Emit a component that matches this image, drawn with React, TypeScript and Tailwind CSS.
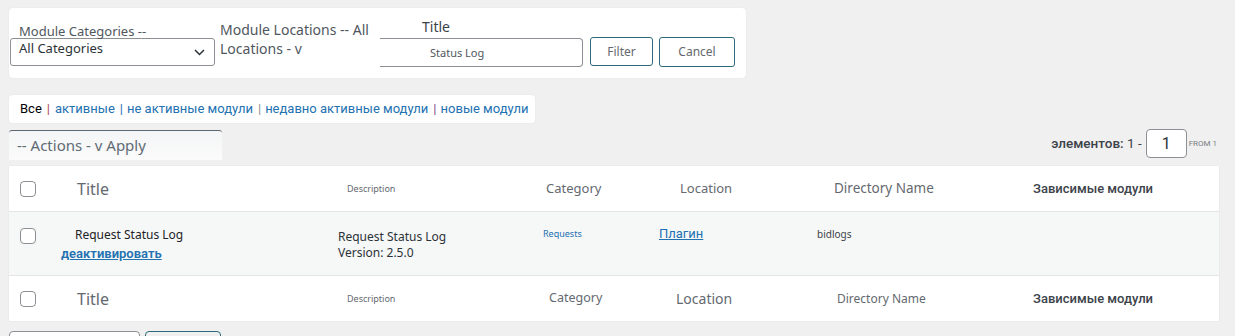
const noto = { fontFamily: '"Noto Sans", "Open Sans", sans-serif' }
const roboto = { fontFamily: 'Roboto, "Noto Sans", sans-serif' }

function Checkbox() {
  return <span className="block w-4 h-4 rounded-[4px] border border-[#8c8f94] bg-white" />
}

const cols = 'grid grid-cols-[52px_277px_202px_115px_160px_210px_1fr]'

function HeadRow({ footer }: { footer?: boolean }) {
  return (
    <div className={`${cols} h-[45px] items-center bg-white text-[#646970]`} style={noto}>
      <div className="pl-[11px]"><Checkbox /></div>
      <div className="pl-[16px] text-[16px]">Title</div>
      <div className="pl-[9px] text-[9px]">Description</div>
      <div className={footer ? 'pl-[9px] text-[12.5px]' : 'pl-[6px] text-[13px]'}>Category</div>
      <div className={footer ? 'pl-[21px] text-[14px]' : 'pl-[25px] text-[13px]'}>Location</div>
      <div className={footer ? 'pl-[22px] text-[12px]' : 'pl-[19px] text-[13.5px]'}>Directory Name</div>
      <div className="pl-[8px] text-[13px] font-medium text-[#3c434a]" style={roboto}>Зависимые модули</div>
    </div>
  )
}

export default function App() {
  return (
    <div className="w-[1235px] h-[336px] overflow-hidden bg-[#f0f0f1] pt-[8px] pl-[9px]" style={noto}>
      {/* Filters */}
      <div className="w-[737px] h-[70px] bg-white rounded-[4px] shadow-[0_0_1px_rgba(0,0,0,0.12)] flex pl-[1px] text-[#50575e]">
        <div className="w-[205px] pt-[17px]">
          <div className="pl-[9px] text-[13px] leading-[13px]">Module Categories --</div>
          <div className="h-[28px] border border-[#8c8f94] rounded-[3px] flex items-start justify-between pl-[8px] pr-[9px] text-[13px] leading-[16px] pt-[1px]">
            <span className="text-[#2c3338]">All Categories</span>
            <svg className="mt-[9px]" width="11" height="7" viewBox="0 0 11 7"><path d="M1 1l4.5 4.5L10 1" fill="none" stroke="#2c3338" strokeWidth="1.5" /></svg>
          </div>
        </div>
        <div className="w-[160px] ml-[5px] pt-[12px] text-[14px] leading-[19px]">Module Locations -- All Locations - v</div>
        <div className="pt-[10px]">
          <div className="ml-[42px] text-[14px] leading-[18px] text-[#3c434a]">Title</div>
          <div className="mt-[2px] w-[203px] h-[29px] border border-l-0 border-[#8c8f94] rounded-r-[4px] pl-[50px] text-[11px] leading-[27px]">Status Log</div>
        </div>
        <div className="pt-[29px] flex gap-[6px] ml-[7px]">
          <div className="w-[63px] h-[29px] border border-[#2c6a7a] rounded-[3px] flex items-center justify-center text-[12px] text-[#646970]">Filter</div>
          <div className="w-[76px] h-[30px] border border-[#2c6a7a] rounded-[3px] flex items-center justify-center text-[12px] text-[#646970]">Cancel</div>
        </div>
      </div>

      {/* Status links */}
      <div className="mt-[17px] w-[526px] h-[28px] bg-white rounded-[3px] shadow-[0_0_1px_rgba(0,0,0,0.15)] flex items-center pl-[11px] text-[13px] text-[#2271b1]" style={roboto}>
        <span className="text-black">Все</span>
        <span className="ml-[5px] mr-[5px] text-[#b0484f]">|</span>
        <span>активные</span>
        <span className="ml-[5px] mr-[4px] text-[#2271b1]">|</span>
        <span>не активные модули</span>
        <span className="ml-[5px] mr-[4px] text-[#8c8f94]">|</span>
        <span>недавно активные модули</span>
        <span className="ml-[5px] mr-[4px] text-[#7b4a8c]">|</span>
        <span>новые модули</span>
      </div>

      {/* Actions and pagination */}
      <div className="mt-[7px] flex items-start justify-between pr-[18px]">
        <div className="w-[213px] h-[30px] bg-gradient-to-b from-[#f4f5f6] to-[#fbfbfb] border-t border-[#5a6670] rounded-t-[3px] pl-[8px] text-[15px] leading-[28px] text-[#5f6b75]">-- Actions - v Apply</div>
        <div className="flex items-center h-[29px] mt-[-1px]" style={roboto}>
          <span className="text-[13.5px] text-[#3c434a]"><span className="font-medium">элементов:</span> 1 -</span>
          <div className="ml-[4px] w-[41px] h-[29px] bg-white border border-[#8c8f94] rounded-[4px] flex items-center justify-center text-[16px] text-[#2c3338]">1</div>
          <span className="ml-[2px] text-[8px] text-[#787c82]">FROM 1</span>
        </div>
      </div>

      {/* Table */}
      <div className="mt-[6px] w-[1210px] shadow-[0_0_1px_rgba(0,0,0,0.12)]">
        <HeadRow />
        <div className={`${cols} h-[65px] items-start bg-[#f6f7f7] border-y border-[#e5e5e5]`}>
          <div className="pl-[11px] pt-[16px]"><Checkbox /></div>
          <div className="pt-[14px]">
            <div className="pl-[14px] text-[12px] leading-[18px] text-[#1d2327]">Request Status Log</div>
            <div className="text-[13px] leading-[20px] font-semibold text-[#2271b1] underline" style={roboto}>деактивировать</div>
          </div>
          <div className="pt-[17px] text-[12px] leading-[16px] text-[#2c3338]">
            <div>Request Status Log</div>
            <div>Version: 2.5.0</div>
          </div>
          <div className="pl-[3px] pt-[16px] text-[9px] leading-[12px] text-[#2271b1]">Requests</div>
          <div className="pl-[4px] pt-[14px] text-[13px] leading-[16px] text-[#2271b1] underline" style={roboto}>Плагин</div>
          <div className="pl-[2px] pt-[15px] text-[10px] leading-[14px] text-[#3c434a]">bidlogs</div>
          <div />
        </div>
        <HeadRow footer />
      </div>

      {/* Bottom actions */}
      <div className="mt-[10px] flex gap-[5px]">
        <div className="w-[131px] h-[30px] bg-white border border-[#8c8f94] rounded-[4px]" />
        <div className="w-[76px] h-[30px] border border-[#2c6a7a] rounded-[4px]" />
      </div>
    </div>
  )
}
